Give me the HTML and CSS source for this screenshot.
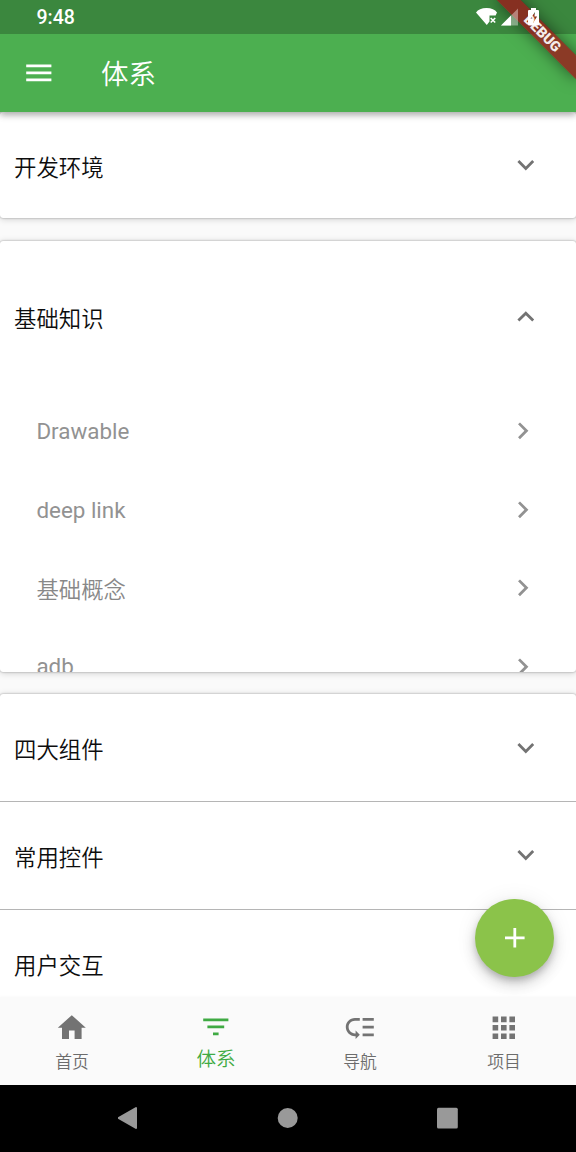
FILE: index.html
```html
<!DOCTYPE html>
<html lang="zh-CN">
<head>
<meta charset="utf-8">
<title>体系</title>
<link rel="stylesheet" href="styles.css">
</head>
<body>
<svg width="0" height="0" class="defs">
  <symbol id="down" viewBox="0 0 24 24"><path d="M16.59 8.59 12 13.17 7.41 8.59 6 10l6 6 6-6z"/></symbol>
  <symbol id="up" viewBox="0 0 24 24"><path d="m12 8-6 6 1.41 1.41L12 10.83l4.59 4.58L18 14z"/></symbol>
  <symbol id="right" viewBox="0 0 24 24"><path d="M10 6 8.59 7.41 13.17 12l-4.58 4.59L10 18l6-6z"/></symbol>
</svg>
<div class="screen">
  <header class="top">
    <div class="status">
      <span class="clock">9:48</span>
    </div>
    <div class="appbar">
      <svg class="icon" viewBox="0 0 24 24"><path d="M3 18h18v-2H3zm0-5h18v-2H3zm0-7v2h18V6z"/></svg>
      <h1 class="title">体系</h1>
    </div>
  </header>
  <main class="content">
    <section class="card">
      <div class="row"><span>开发环境</span><svg class="icon"><use href="#down"/></svg></div>
    </section>
    <section class="card open">
      <div class="row tall"><span>基础知识</span><svg class="icon"><use href="#up"/></svg></div>
      <div class="item"><span>Drawable</span><svg class="icon"><use href="#right"/></svg></div>
      <div class="item"><span>deep link</span><svg class="icon"><use href="#right"/></svg></div>
      <div class="item"><span class="han">基础概念</span><svg class="icon"><use href="#right"/></svg></div>
      <div class="item"><span>adb</span><svg class="icon"><use href="#right"/></svg></div>
    </section>
    <section class="card last">
      <div class="row"><span>四大组件</span><svg class="icon"><use href="#down"/></svg></div>
      <div class="row"><span>常用控件</span><svg class="icon"><use href="#down"/></svg></div>
      <div class="row"><span>用户交互</span><svg class="icon"><use href="#down"/></svg></div>
    </section>
  </main>
  <nav class="tabs">
    <div class="tab"><svg class="icon" viewBox="0 0 24 24"><path d="M10 20v-6h4v6h5v-8h3L12 3 2 12h3v8z"/></svg><span>首页</span></div>
    <div class="tab active"><svg class="icon" viewBox="0 0 24 24"><path d="M10 18h4v-2h-4zM3 6v2h18V6zm3 7h12v-2H6z"/></svg><span>体系</span></div>
    <div class="tab"><svg class="icon" viewBox="0 0 24 24"><path d="M14 5h8v2h-8zm0 5.500h8v2h-8zm0 5.500h8v2h-8zM2 11.500C2 15.080 4.920 18 8.500 18H9v2l3-3-3-3v2h-.5C6.020 16 4 13.980 4 11.500S6.020 7 8.500 7H12V5H8.500C4.920 5 2 7.920 2 11.500z"/></svg><span>导航</span></div>
    <div class="tab"><svg class="icon" viewBox="0 0 24 24"><path d="M4 8h4V4H4zm6 12h4v-4h-4zm-6 0h4v-4H4zm0-6h4v-4H4zm6 0h4v-4h-4zm6-10v4h4V4zm-6 4h4V4h-4zm6 6h4v-4h-4zm0 6h4v-4h-4z"/></svg><span>项目</span></div>
  </nav>
  <footer class="system">
    <svg viewBox="0 0 22 24"><path d="M18 2v20L.5 12z" stroke="#999" stroke-width="2" stroke-linejoin="round"/></svg>
    <svg viewBox="0 0 22 24"><circle cx="10.700" cy="12" r="10"/></svg>
    <svg viewBox="0 0 22 24"><rect x="0" y="1.800" width="20.800" height="20.800" rx="1.500"/></svg>
  </footer>
  <button class="fab" aria-label="add"><svg class="icon" viewBox="0 0 24 24"><path d="M19 13h-6v6h-2v-6H5v-2h6V5h2v6h6z"/></svg></button>
  <div class="corner"><div class="banner">DEBUG</div></div>
  <svg class="indicators" viewBox="476 0 70 34">
    <path d="M476 12.500Q479 8 486.500 8T497 12.500L495.600 15.500H489.500V21.500L486.800 25z"/>
    <path d="m490.700 18 4.500 4.500m0-4.500-4.500 4.500" stroke="#fff" stroke-width="1.600"/>
    <path d="M518 8.500V25.500H501z" opacity=".4"/>
    <path d="M511 15.500V25.500H501z"/>
    <path fill-rule="evenodd" d="M531 8h5v2h2q1 0 1 1v13.500q0 1-1 1h-9q-1 0-1-1V11q0-1 1-1h2zM535 12l-4.500 6.500h2.600v4.500l4-6.500h-2.700z"/>
  </svg>
</div>
</body>
</html>
```
FILE: styles.css
```css
* { box-sizing: border-box; }
body {
  margin: 0;
  font-family: Roboto, "Noto Sans CJK SC", sans-serif;
  font-size: 22.4px;
  color: #1b1b1b;
}
svg { fill: currentColor; flex: none; }
.defs { position: absolute; }
.screen {
  position: relative;
  width: 576px;
  height: 1152px;
  overflow: hidden;
  display: flex;
  flex-direction: column;
  background: #fafafa;
}
.icon { width: 33.6px; height: 33.6px; display: block; }
.title, .row, .han, .tab {
  font-family: "Noto Sans CJK SC DemiLight", "Noto Sans CJK SC", sans-serif;
  font-weight: 350;
}
.top {
  position: relative;
  z-index: 2;
  flex: none;
  background: #4caf50;
  color: #fff;
  box-shadow: 0 3px 6px rgba(0, 0, 0, .25), 0 1px 10px rgba(0, 0, 0, .15);
}
.status {
  height: 33.6px;
  padding-left: 36.500px;
  display: flex;
  align-items: center;
  background: #3b873e;
}
.clock { font-size: 19.500px; font-weight: 500; padding-top: 2px; }
.appbar {
  height: 78.400px;
  padding-left: 22.400px;
  display: flex;
  align-items: center;
  gap: 45px;
}
.title { margin: 0; padding-bottom: 1px; font-size: 27.500px; line-height: 40px; }
.content {
  flex: 1;
  min-height: 0;
  overflow: hidden;
  display: flex;
  flex-direction: column;
  gap: 22.400px;
}
.card {
  flex: none;
  background: #fff;
  border-radius: 3px;
  box-shadow: 0 0 2px rgba(0, 0, 0, .38), 0 1px 7px rgba(0, 0, 0, .18);
}
.open { height: 431px; overflow: hidden; }
.row {
  height: 106.400px;
  padding: 0 33.600px 0 14px;
  display: flex;
  align-items: center;
  justify-content: space-between;
}
.row span { line-height: 34px; padding-top: 1px; color: #0d0d0d; }
.row .icon { color: #737373; }
.tall { height: 151.200px; }
.last .row { height: 108px; border-bottom: 1px solid #b5b5b5; }
.last .row:first-child { height: 107.500px; }
.item {
  height: 78.400px;
  padding: 0 36px 0 36.400px;
  display: flex;
  align-items: center;
  justify-content: space-between;
  color: #929292;
}
.han { padding-top: 1px; color: #888; }
.tabs {
  position: relative;
  z-index: 1;
  flex: none;
  height: 87.500px;
  display: flex;
  background: #fafafa;
  box-shadow: 0 -1px 2px rgba(0, 0, 0, .02);
}
.tab {
  flex: 1;
  display: flex;
  flex-direction: column;
  align-items: center;
  padding-top: 13.500px;
  font-size: 16.800px;
  line-height: 24px;
  color: #6c6c6c;
}
.tab .icon { color: #737373; }
.tab span { margin-top: 4.500px; }
.tab.active, .active .icon { color: #3faa43; }
.tab.active { font-size: 19.600px; padding-top: 12.500px; }
.tab.active span { margin-top: 3px; }
.system {
  flex: none;
  height: 67.200px;
  display: flex;
  justify-content: center;
  align-items: center;
  gap: 137.500px;
  background: #000;
  color: #999;
}
.system svg { width: 22px; height: 24px; }
.fab {
  position: absolute;
  z-index: 3;
  right: 22.400px;
  top: 898.600px;
  width: 78.400px;
  height: 78.400px;
  padding: 0;
  border: 0;
  border-radius: 50%;
  background: #8bc34a;
  color: #fff;
  display: flex;
  align-items: center;
  justify-content: center;
  box-shadow: 0 4px 7px -1px rgba(0, 0, 0, .2), 0 8px 14px rgba(0, 0, 0, .14), 0 1px 22px rgba(0, 0, 0, .08);
}
.corner {
  position: absolute;
  z-index: 4;
  top: 0;
  right: 0;
  width: 140px;
  height: 112px;
  overflow: hidden;
}
.banner {
  position: absolute;
  left: 84px;
  top: 39.200px;
  width: 112px;
  height: 16.800px;
  transform: rotate(45deg);
  transform-origin: 56px -39.200px;
  background: rgba(160, 19, 24, .75);
  color: #f4ecea;
  font-size: 14.280px;
  font-weight: 900;
  line-height: 16.800px;
  text-align: center;
  box-shadow: 0 0 16px rgba(0, 0, 0, .5);
}
.indicators {
  position: absolute;
  z-index: 5;
  left: 476px;
  top: 0;
  width: 70px;
  height: 34px;
  color: #fff;
}
```
